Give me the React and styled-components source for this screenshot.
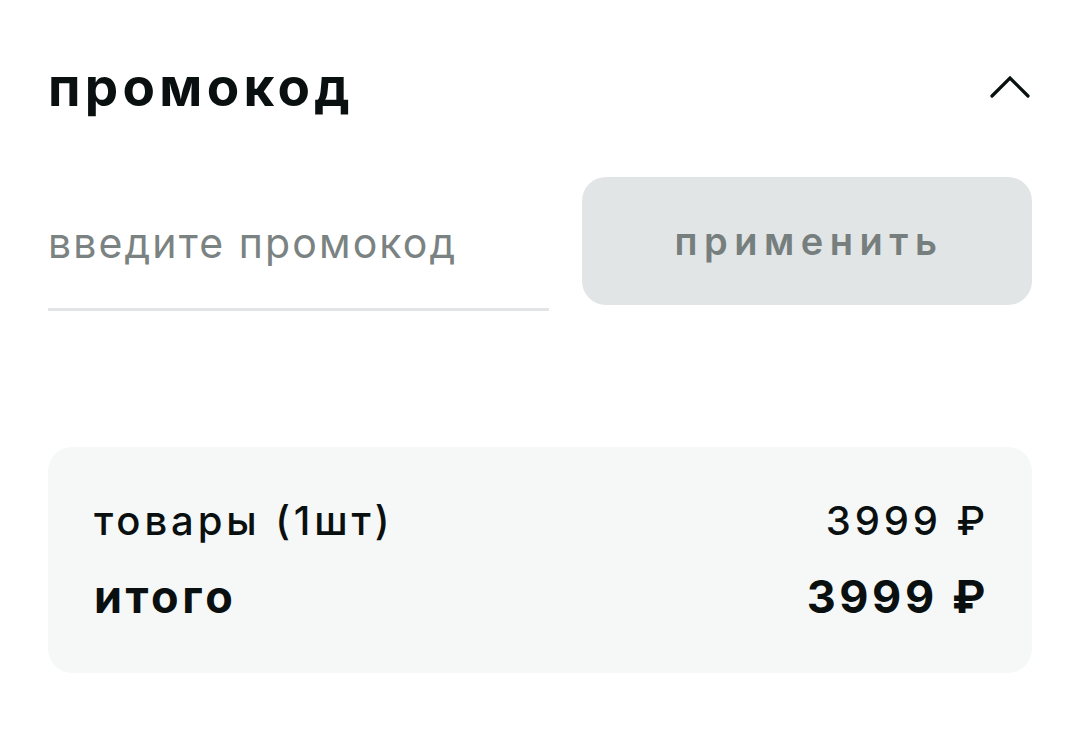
import React from 'react';
import styled, { createGlobalStyle } from 'styled-components';

const GlobalStyle = createGlobalStyle`
    body {
        margin: 0;
        background: #ffffff;
        font-family: Inter, "Noto Sans", sans-serif;
        color: #0a1010;
    }
`;

const Page = styled.div`
    padding: 48px 48px 0;
    display: flex;
    flex-direction: column;
`;

const Header = styled.div`
    display: flex;
    align-items: center;
    justify-content: space-between;
    height: 78px;
`;

const Title = styled.h2`
    margin: 0;
    font-size: 53px;
    font-weight: 700;
    letter-spacing: 4.3px;
`;

const Toggle = styled.button`
    border: 0;
    background: none;
    padding: 0;
    margin-right: 2px;
    display: flex;
    cursor: pointer;
`;

const PromoRow = styled.div`
    display: flex;
    align-items: stretch;
    gap: 33px;
    margin-top: 51px;
`;

const Field = styled.input`
    width: 501px;
    box-sizing: border-box;
    border: 0;
    border-bottom: 3px solid #e2e5e5;
    padding: 4px 0 4px;
    height: 134px;
    font-family: inherit;
    font-size: 41px;
    letter-spacing: 2.1px;
    color: #0a1010;
    background: transparent;
    outline: none;

    &::placeholder {
        color: #7a8382;
    }
`;

const Apply = styled.button`
    flex: 1;
    height: 128px;
    border: 0;
    border-radius: 24px;
    background: #e2e5e6;
    color: #767f7e;
    font-family: inherit;
    font-size: 38px;
    font-weight: 600;
    letter-spacing: 6.5px;
    padding: 0 0 0 4px;
    cursor: pointer;
`;

const Summary = styled.div`
    margin-top: 136px;
    background: #f6f8f8;
    border-radius: 24px;
    padding: 45px 43px 49px 46px;
    display: flex;
    flex-direction: column;
    gap: 20px;
`;

const Line = styled.div`
    display: flex;
    justify-content: space-between;
    align-items: center;
    height: 56px;
    font-size: ${p => (p.$total ? '45px' : '40px')};
    font-weight: ${p => (p.$total ? 700 : 500)};
    letter-spacing: ${p => (p.$total ? '3.6px' : '3.9px')};
`;

const ChevronUp = () => (
    <svg width="40" height="24" viewBox="0 0 40 24" fill="none">
        <path d="M2 21 L20 3 L38 21" stroke="#0a1010" strokeWidth="3.2" strokeLinecap="round" strokeLinejoin="miter" />
    </svg>
);

const App = () => {
    return (
        <Page>
            <GlobalStyle />
            <Header>
                <Title>промокод</Title>
                <Toggle aria-label="свернуть">
                    <ChevronUp />
                </Toggle>
            </Header>
            <PromoRow>
                <Field placeholder="введите промокод" />
                <Apply>применить</Apply>
            </PromoRow>
            <Summary>
                <Line>
                    <span>товары (1шт)</span>
                    <span>3999 ₽</span>
                </Line>
                <Line $total>
                    <span>итого</span>
                    <span>3999 ₽</span>
                </Line>
            </Summary>
        </Page>
    );
};

export default App;
